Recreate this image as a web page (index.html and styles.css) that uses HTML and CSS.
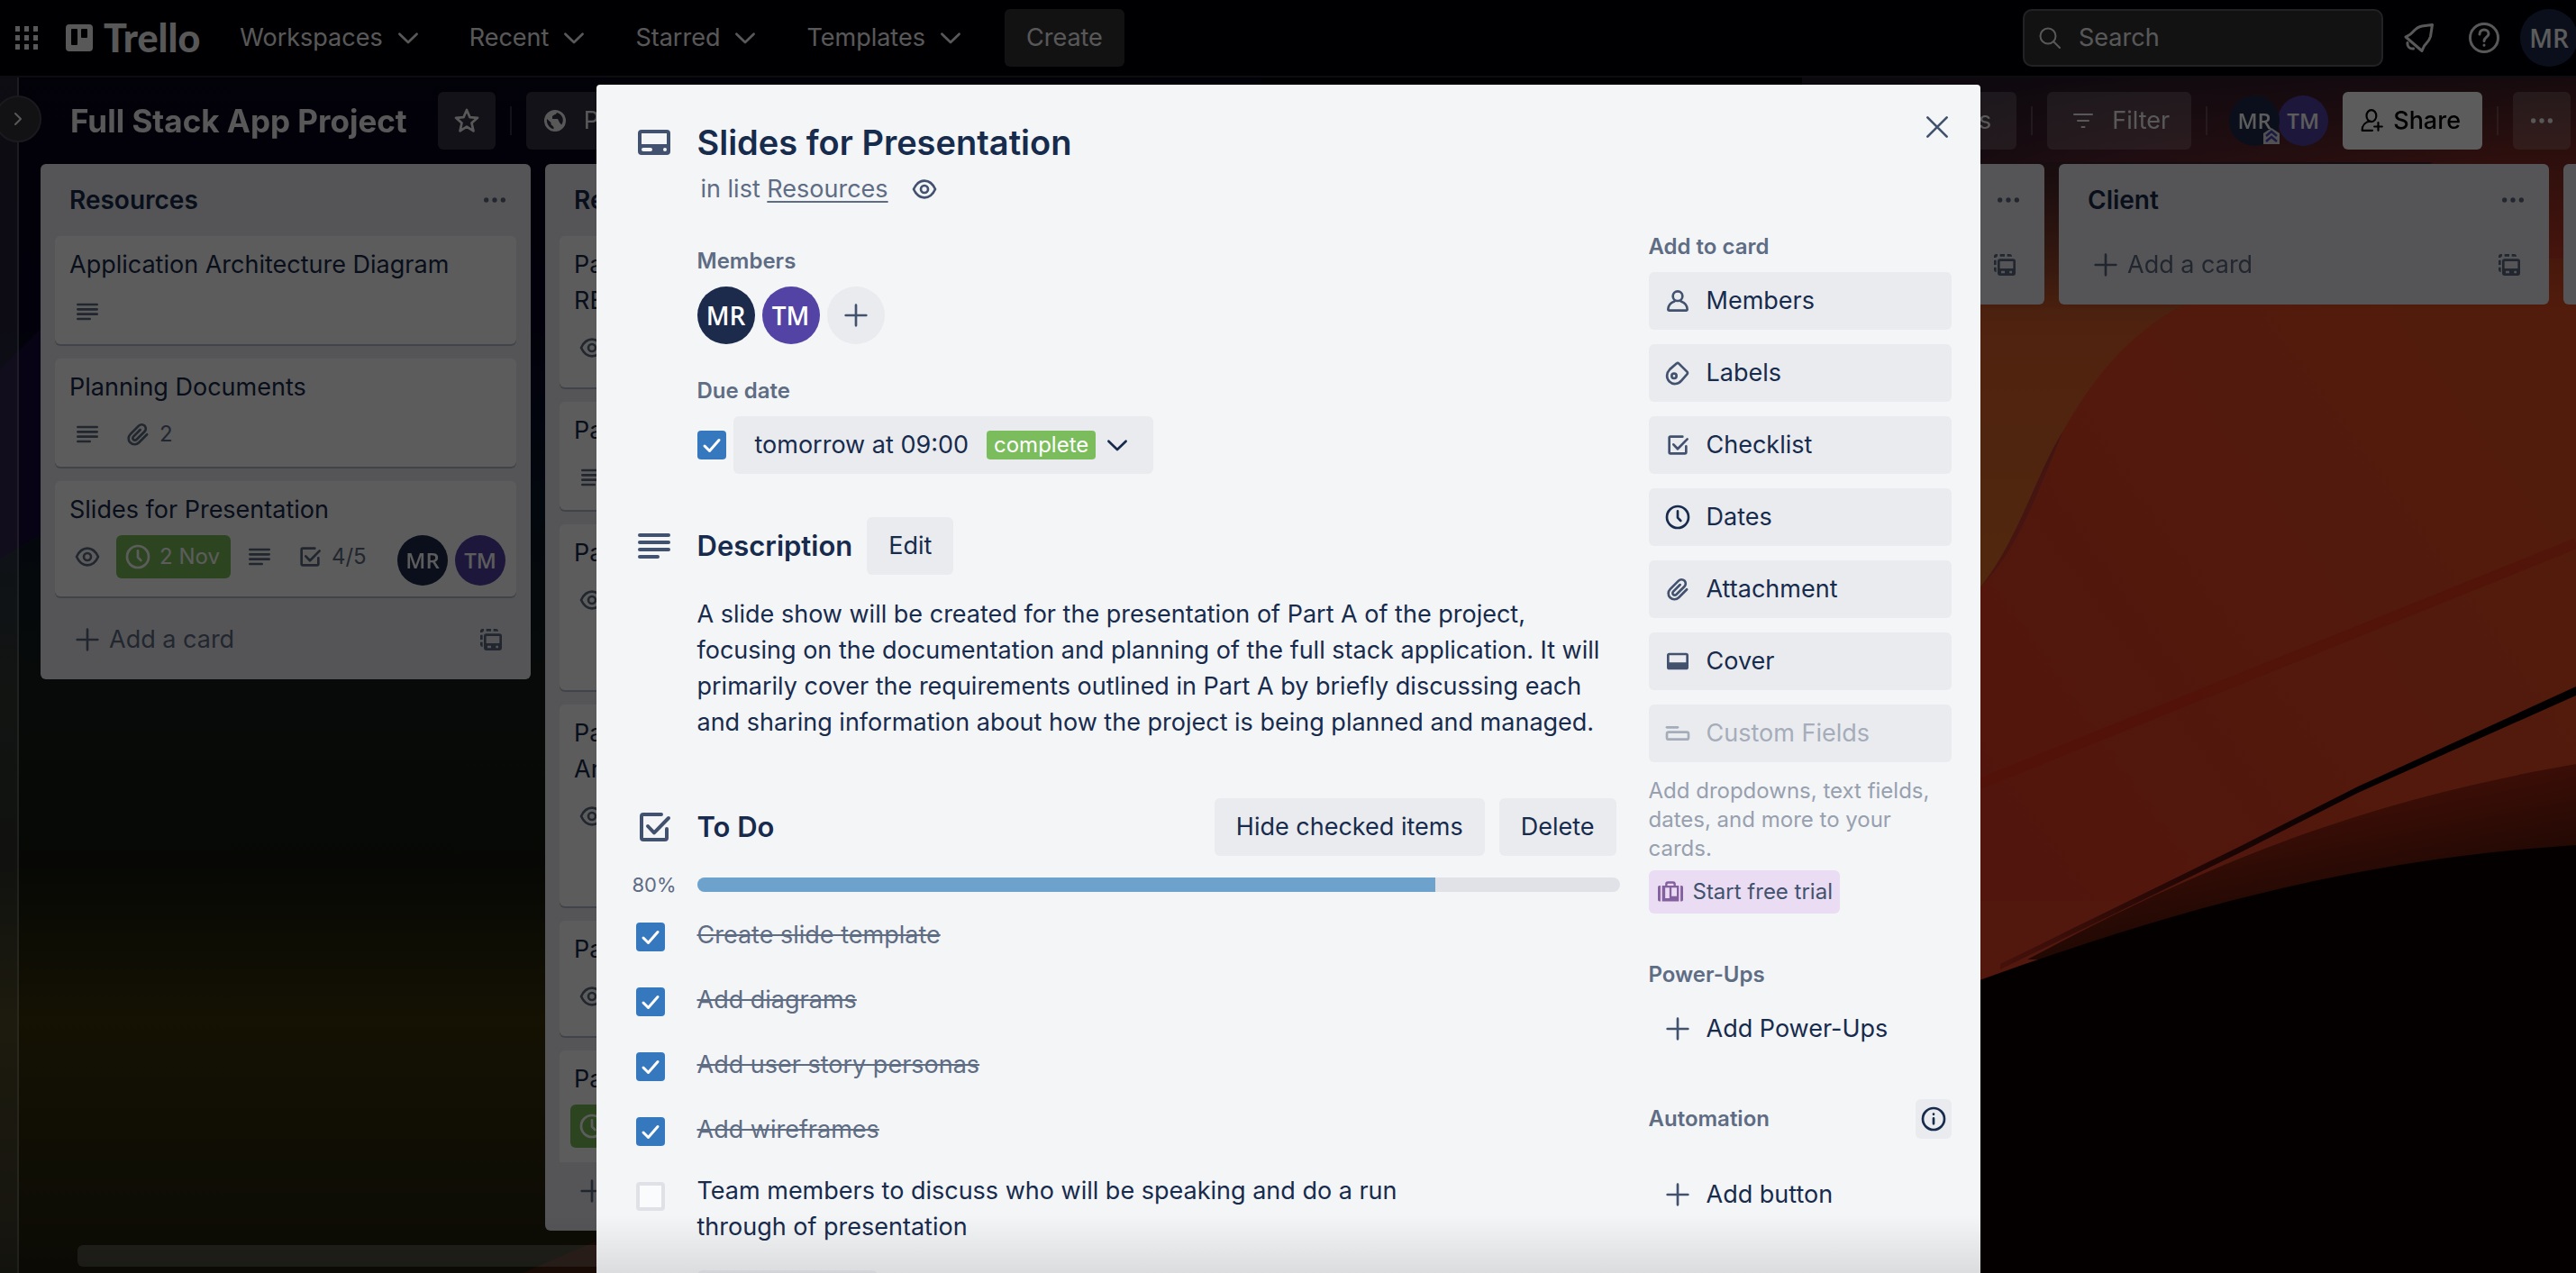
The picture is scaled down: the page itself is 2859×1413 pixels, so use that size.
FILE: index.html
```html
<!DOCTYPE html>
<html lang="en">
<head>
<meta charset="utf-8">
<title>Full Stack App Project | Trello</title>
<meta name="viewport" content="width=device-width, initial-scale=1">
<link rel="stylesheet" href="styles.css">
</head>
<body>
<svg class="sprite" aria-hidden="true">
  <defs>
    <symbol id="i-chevron" viewBox="0 0 24 24"><path class="s" d="M4.8 8.8l7.2 7 7.2-7"/></symbol>
    <symbol id="i-lines" viewBox="0 0 24 24"><path class="s" d="M4 6h16M4 10h16M4 14h16M4 18h10"/></symbol>
    <symbol id="i-eye" viewBox="0 0 24 24"><path class="s" d="M3 12c2-4.400 5.200-7 9-7s7 2.600 9 7c-2 4.400-5.200 7-9 7s-7-2.600-9-7z"/><circle class="s" cx="12" cy="12" r="3"/></symbol>
    <symbol id="i-clip" viewBox="0 0 24 24"><path class="s" d="M19.600 12.200l-6.700 6.700c-2 2-5.200 2-7.200.100s-1.900-5.100.100-7.100l6.900-6.900c1.400-1.400 3.500-1.400 4.900-.100s1.300 3.500 0 4.800l-6.800 6.800c-.700.700-1.800.700-2.500 0s-.700-1.800 0-2.500l5.700-5.700"/></symbol>
    <symbol id="i-clock" viewBox="0 0 24 24"><circle class="s" cx="12" cy="12" r="9"/><path class="s" d="M12 7v5.500l2.500 2.500"/></symbol>
    <symbol id="i-check" viewBox="0 0 24 24"><path class="s" d="M16 5H6a1 1 0 0 0-1 1v12a1 1 0 0 0 1 1h12a1 1 0 0 0 1-1v-5M8.500 11.500l3.500 3.700L20 7"/></symbol>
    <symbol id="i-plus" viewBox="0 0 24 24"><path class="s" d="M12 3.500v17M3.500 12h17"/></symbol>
    <symbol id="i-dots" viewBox="0 0 24 24"><circle class="f" cx="5" cy="12" r="2"/><circle class="f" cx="12" cy="12" r="2"/><circle class="f" cx="19" cy="12" r="2"/></symbol>
    <symbol id="i-template" viewBox="0 0 24 24"><path class="f" fill-rule="evenodd" d="M8 7h11a2 2 0 0 1 2 2v10a2 2 0 0 1-2 2H8a2 2 0 0 1-2-2V9a2 2 0 0 1 2-2zm0 2v6h11V9zm1 8v2h3v-2zm7 0v2h2v-2z"/><path class="f" d="M3 5a2 2 0 0 1 2-2h1v2H5v1H3zM8 3h4v2H8zM14 3h2a2 2 0 0 1 2 2h-4zM3 8h2v4H3zM3 14h2v4a2 2 0 0 1-2-2z"/></symbol>
    <symbol id="i-card" viewBox="0 0 24 24"><path class="f" fill-rule="evenodd" d="M5 5h14a2 2 0 0 1 2 2v10a2 2 0 0 1-2 2H5a2 2 0 0 1-2-2V7a2 2 0 0 1 2-2zm0 2v6h14V7zm1 8a1 1 0 0 0 0 2h4a1 1 0 0 0 0-2zm12 0a1 1 0 1 0 0 2 1 1 0 0 0 0-2z"/></symbol>
    <symbol id="i-cover" viewBox="0 0 24 24"><path class="f" fill-rule="evenodd" d="M5 5h14a2 2 0 0 1 2 2v10a2 2 0 0 1-2 2H5a2 2 0 0 1-2-2V7a2 2 0 0 1 2-2zm0 2v6h14V7z"/></symbol>
    <symbol id="i-member" viewBox="0 0 24 24"><circle class="s" cx="12" cy="8" r="4"/><path class="s" d="M9.300 12.300C6 13.500 4 16 4 19.200c0 .500.300.800.800.800h14.400c.500 0 .800-.300.800-.800 0-3.200-2-5.700-5.300-6.900"/></symbol>
    <symbol id="i-label" viewBox="0 0 24 24"><path class="s" d="M11 4.200c.600-.600 1.400-.600 2 0l6.800 6.800c.600.600.600 1.400 0 2l-4.600 5.300c-3 3.500-7.300 3.500-10.100.800s-2.700-7 .400-10.200z"/><circle class="s" cx="9" cy="14.500" r="2"/></symbol>
    <symbol id="i-fields" viewBox="0 0 24 24"><path class="s" d="M3 7h9"/><rect class="s" x="3" y="11" width="18" height="6" rx="1.500"/></symbol>
    <symbol id="i-case" viewBox="0 0 24 24"><path class="f" fill-rule="evenodd" d="M2.500 6v15h-1A1.500 1.500 0 0 1 0 19.500v-12A1.500 1.500 0 0 1 1.500 6zM7 6V4.500A2.500 2.500 0 0 1 9.500 2h5A2.500 2.500 0 0 1 17 4.500V6h3v15H4V6zm2-1v1h6V5a1 1 0 0 0-1-1h-4a1 1 0 0 0-1 1zM7 8v10h4V8zm6 0v8h5V8zM21.500 6h1A1.500 1.500 0 0 1 24 7.500v12a1.500 1.500 0 0 1-1.500 1.500h-1z"/></symbol>
    <symbol id="i-close" viewBox="0 0 24 24"><path class="s" d="M4 4l16 16M20 4L4 20"/></symbol>
    <symbol id="i-info" viewBox="0 0 24 24"><circle class="s" cx="12" cy="12" r="9"/><path class="s" d="M12 11.500V16M12 8v.100"/></symbol>
    <symbol id="i-star" viewBox="0 0 24 24"><path class="s" d="M12 3l2.600 6.100 6.400.500-4.900 4.300 1.500 6.600L12 17l-5.600 3.500 1.500-6.600L3 9.600l6.400-.500z"/></symbol>
    <symbol id="i-globe" viewBox="0 0 24 24"><path class="f" fill-rule="evenodd" d="M12 0a12 12 0 1 1 0 24 12 12 0 0 1 0-24zM3 10c-.800 5 2.500 10 7.500 11.300V19l-3-3v-2zM14 3c-.500 1-1 2-2.500 2.200L9 7v3h6l2 4 2.200 2.500c3-4.500 2.200-11-5.200-13.500z"/></symbol>
    <symbol id="i-filter" viewBox="0 0 24 24"><path class="s" d="M2 5h20M6 12h12M10.500 19h3"/></symbol>
    <symbol id="i-share" viewBox="0 0 24 24"><path class="s" d="M10 12.500C5 13 1.500 16.500 1.500 22H12"/><ellipse class="s" cx="11" cy="7" rx="5" ry="6"/><path class="s" d="M18 14v8M14 18h8"/></symbol>
    <symbol id="i-search" viewBox="0 0 24 24"><circle class="s" cx="10" cy="10" r="8.500"/><path class="s" d="M16.500 16.500L23 23"/></symbol>
    <symbol id="i-bell" viewBox="0 0 34 34"><path class="s" d="M31.500 2.500L20 4C12 5.500 11 11 6.500 13.500L2 16l18 15.500 2-4.500c1-3 6-5.500 7.500-11.500zM4 22.500c-.500 4 2.500 7 6.500 6.500"/></symbol>
    <symbol id="i-help" viewBox="0 0 34 34"><circle class="s" cx="17" cy="17" r="15.500"/><path class="s" d="M12 13c0-3 2-5 5-5s5 2 5 4.700c0 3.300-5 3.800-5 7.800M17 25v.200"/></symbol>
  </defs>
</svg>

<svg class="wallpaper" viewBox="0 0 2859 1413" preserveAspectRatio="xMidYMid slice" aria-hidden="true">
  <defs>
    <linearGradient id="w-left" x1="0" y1="0" x2="0" y2="1">
      <stop offset="0" stop-color="#060618"/><stop offset=".25" stop-color="#060420"/><stop offset=".4" stop-color="#0a1628"/>
      <stop offset=".54" stop-color="#161e19"/><stop offset=".68" stop-color="#14180f"/><stop offset=".8" stop-color="#3a320b"/><stop offset="1" stop-color="#22200f"/>
    </linearGradient>
    <linearGradient id="w-red" gradientUnits="userSpaceOnUse" x1="2080" y1="100" x2="2500" y2="480">
      <stop offset="0" stop-color="#241d2c"/><stop offset=".45" stop-color="#8c3440"/><stop offset="1" stop-color="#e44024"/>
    </linearGradient>
    <linearGradient id="w-glow" gradientUnits="userSpaceOnUse" x1="2300" y1="1000" x2="2859" y2="600">
      <stop offset="0" stop-color="#e43c24"/><stop offset="1" stop-color="#e44e22"/>
    </linearGradient>
    <linearGradient id="w-orange" gradientUnits="userSpaceOnUse" x1="2230" y1="180" x2="2230" y2="640">
      <stop offset="0" stop-color="#5a2c2c"/><stop offset=".4" stop-color="#dc602c"/><stop offset="1" stop-color="#e06e28"/>
    </linearGradient>
    <linearGradient id="w-band" gradientUnits="userSpaceOnUse" x1="2780" y1="860" x2="2800" y2="960">
      <stop offset="0" stop-color="#a42814"/><stop offset="1" stop-color="#5c180a"/>
    </linearGradient>
    <linearGradient id="w-line" gradientUnits="userSpaceOnUse" x1="2220" y1="1080" x2="2640" y2="870">
      <stop offset="0" stop-color="#c03020"/><stop offset=".5" stop-color="#60140e"/><stop offset="1" stop-color="#0a0208"/>
    </linearGradient>
    <linearGradient id="w-fade" x1="0" y1="0" x2="0" y2="1">
      <stop offset="0" stop-color="#201828" stop-opacity=".85"/><stop offset="1" stop-color="#402028" stop-opacity="0"/>
    </linearGradient>
  </defs>
  <rect width="2859" height="1413" fill="#04040c"/>
  <rect width="1400" height="1413" fill="url(#w-left)"/>
  <path d="M0 410L50 360V590L0 620z" fill="#140838"/>
  <path d="M580 1413L680 1370V1413z" fill="#4a2010"/>
  <path d="M2000 86H2859V1100H2000z" fill="url(#w-red)"/>
  <path d="M2197 653C2240 610 2260 550 2290 478C2320 410 2380 360 2425 338C2500 300 2700 290 2859 286V1000H2197z" fill="url(#w-glow)"/>
  <path d="M2100 180H2700C2600 270 2480 305 2425 338C2360 370 2320 425 2290 478C2260 525 2240 600 2197 653H2100z" fill="url(#w-orange)"/>
  <rect x="2000" y="86" width="859" height="260" fill="url(#w-fade)"/>
  <path d="M2197 870L2859 603" stroke="#e42814" stroke-width="12" opacity=".5"/>
  <path d="M2859 848C2617 890 2446 960 2250 1065L2859 1065z" fill="url(#w-band)"/>
  <path d="M2859 762L2617 873L2489 938L2220 1070V1076L2489 945L2617 880L2859 772z" fill="url(#w-line)"/>
  <path d="M2859 938C2600 955 2400 1015 2197 1088H2100V1413H2859z" fill="#100202"/>
</svg>

<header class="topbar">
  <button class="icon-btn apps" aria-label="Switch apps">
    <svg viewBox="0 0 27 27"><path class="f" d="M1 0h5v6H1zM11 0h5v6h-5zM21 0h5v6h-5zM1 10h5v6H1zM11 10h5v6h-5zM21 10h5v6h-5zM1 20h5v6H1zM11 20h5v6h-5zM21 20h5v6h-5z"/></svg>
  </button>
  <a class="logo" href="#">
    <svg viewBox="0 0 30 30" aria-hidden="true"><path class="f" fill-rule="evenodd" d="M4 0h22a4 4 0 0 1 4 4v22a4 4 0 0 1-4 4H4a4 4 0 0 1-4-4V4a4 4 0 0 1 4-4zm3 5a1 1 0 0 0-1 1v16a1 1 0 0 0 1 1h5a1 1 0 0 0 1-1V6a1 1 0 0 0-1-1zm11 0a1 1 0 0 0-1 1v8a1 1 0 0 0 1 1h5a1 1 0 0 0 1-1V6a1 1 0 0 0-1-1z"/></svg>
    <span>Trello</span>
  </a>
  <nav class="menu">
    <button>Workspaces<svg class="ic"><use href="#i-chevron"/></svg></button>
    <button>Recent<svg class="ic"><use href="#i-chevron"/></svg></button>
    <button>Starred<svg class="ic"><use href="#i-chevron"/></svg></button>
    <button>Templates<svg class="ic"><use href="#i-chevron"/></svg></button>
  </nav>
  <button class="create">Create</button>
  <label class="search"><svg aria-hidden="true"><use href="#i-search"/></svg><input type="search" placeholder="Search" aria-label="Search"></label>
  <button class="icon-btn tool" aria-label="Notifications"><svg><use href="#i-bell"/></svg></button>
  <button class="icon-btn tool" aria-label="Help"><svg><use href="#i-help"/></svg></button>
  <span class="avatar lg navy">MR</span>
</header>

<div class="workspace">
  <aside class="rail"><button class="toggle" aria-label="Open sidebar"><svg viewBox="0 0 12 16"><path class="s" d="M3 2l6 6-6 6"/></svg></button></aside>
  <main class="board">
    <div class="boardbar">
      <h1>Full Stack App Project</h1>
      <button class="bar-btn square" aria-label="Star board"><svg class="ic"><use href="#i-star"/></svg></button>
      <i class="rule"></i>
      <button class="bar-btn public"><svg><use href="#i-globe"/></svg>Public</button>
      <span class="grow"></span>
      <button class="bar-btn power">Power-Ups</button>
      <i class="rule"></i>
      <button class="bar-btn filter"><svg><use href="#i-filter"/></svg>Filter</button>
      <i class="rule"></i>
      <div class="people">
        <span class="avatar md navy">MR<svg class="admin" viewBox="0 0 18 18"><path d="M0 6L9 0l9 6v12H0z" fill="#dfe1e6"/><path d="M3 9l6-5 6 5M3 15l6-5 6 5" fill="none" stroke="#4c46b8" stroke-width="2.500"/></svg></span>
        <span class="avatar md violet">TM</span>
      </div>
      <button class="share"><svg><use href="#i-share"/></svg>Share</button>
      <i class="rule"></i>
      <button class="bar-btn more" aria-label="Show menu"><svg class="ic"><use href="#i-dots"/></svg></button>
    </div>

    <div class="lists">
      <section class="list">
        <header><h2>Resources</h2><button aria-label="List actions"><svg class="ic"><use href="#i-dots"/></svg></button></header>
        <article class="card"><p>Application Architecture Diagram</p>
          <div class="badges"><span class="badge"><svg class="ic"><use href="#i-lines"/></svg></span></div></article>
        <article class="card"><p>Planning Documents</p>
          <div class="badges"><span class="badge"><svg class="ic"><use href="#i-lines"/></svg></span><span class="badge"><svg class="ic"><use href="#i-clip"/></svg>2</span></div></article>
        <article class="card"><p>Slides for Presentation</p>
          <div class="badges"><span class="badge"><svg class="ic"><use href="#i-eye"/></svg></span><span class="badge done"><svg class="ic"><use href="#i-clock"/></svg>2 Nov</span><span class="badge"><svg class="ic"><use href="#i-lines"/></svg></span><span class="badge"><svg class="ic"><use href="#i-check"/></svg>4/5</span>
            <span class="faces"><span class="avatar md navy">MR</span><span class="avatar md violet">TM</span></span></div></article>
        <footer><button class="add"><svg class="ic"><use href="#i-plus"/></svg>Add a card</button><button aria-label="Create from template"><svg class="ic"><use href="#i-template"/></svg></button></footer>
      </section>

      <section class="list">
        <header><h2>Requirements</h2><button aria-label="List actions"><svg class="ic"><use href="#i-dots"/></svg></button></header>
        <article class="card"><p>Part A<br>README</p>
          <div class="badges"><span class="badge"><svg class="ic"><use href="#i-eye"/></svg></span><span class="faces"><span class="avatar md navy"></span></span></div></article>
        <article class="card"><p>Part A</p>
          <div class="badges"><span class="badge"><svg class="ic"><use href="#i-lines"/></svg></span></div></article>
        <article class="card"><p>Part A</p>
          <div class="badges"><span class="badge"><svg class="ic"><use href="#i-eye"/></svg></span></div>
          <div class="badges"><span class="faces"><span class="avatar md navy"></span></span></div></article>
        <article class="card"><p>Part A<br>Architecture</p>
          <div class="badges"><span class="badge"><svg class="ic"><use href="#i-eye"/></svg></span></div>
          <div class="badges"><span class="faces"><span class="avatar md navy"></span></span></div></article>
        <article class="card"><p>Part A</p>
          <div class="badges"><span class="badge"><svg class="ic"><use href="#i-eye"/></svg></span><span class="faces"><span class="avatar md navy"></span></span></div></article>
        <article class="card cut"><p>Part A</p>
          <div class="badges"><span class="badge done"><svg class="ic"><use href="#i-clock"/></svg>2 Nov</span></div></article>
        <footer><button class="add"><svg class="ic"><use href="#i-plus"/></svg>Add a card</button></footer>
      </section>

      <section class="list">
        <header></header>
        <footer></footer>
      </section>
      <section class="list">
        <header><h2></h2><button aria-label="List actions"><svg class="ic"><use href="#i-dots"/></svg></button></header>
        <footer><span></span><button aria-label="Create from template"><svg class="ic"><use href="#i-template"/></svg></button></footer>
      </section>
      <section class="list">
        <header><h2>Client</h2><button aria-label="List actions"><svg class="ic"><use href="#i-dots"/></svg></button></header>
        <footer><button class="add"><svg class="ic"><use href="#i-plus"/></svg>Add a card</button><button aria-label="Create from template"><svg class="ic"><use href="#i-template"/></svg></button></footer>
      </section>
      <section class="list">
        <header></header>
        <footer></footer>
      </section>
    </div>
    <div class="scroller"><div class="thumb"></div></div>
  </main>
</div>

<div class="overlay">
  <section class="modal" role="dialog" aria-modal="true" aria-labelledby="card-title">
    <button class="close" aria-label="Close"><svg class="ic"><use href="#i-close"/></svg></button>
    <header class="modal-head">
      <svg class="big"><use href="#i-card"/></svg>
      <div>
        <h2 id="card-title">Slides for Presentation</h2>
        <p class="where">in list <a href="#">Resources</a><svg class="ic"><use href="#i-eye"/></svg></p>
      </div>
    </header>
    <div class="columns">
      <div class="content">
        <div class="details">
          <h3>Members</h3>
          <div class="members"><span class="avatar lg navy">MR</span><span class="avatar lg violet">TM</span><button class="avatar lg plus" aria-label="Add member"><svg class="ic"><use href="#i-plus"/></svg></button></div>
          <h3 class="due-label">Due date</h3>
          <div class="due"><input type="checkbox" checked aria-label="Mark due date complete"><button class="soft">tomorrow at 09:00<span class="complete">complete</span><svg class="ic"><use href="#i-chevron"/></svg></button></div>
        </div>

        <div class="row description-head"><svg class="big"><use href="#i-lines"/></svg><h4>Description</h4><button class="soft">Edit</button></div>
        <p class="description">A slide show will be created for the presentation of Part A of the project, focusing on the documentation and planning of the full stack application. It will primarily cover the requirements outlined in Part A by briefly discussing each and sharing information about how the project is being planned and managed.</p>

        <div class="row todo-head"><svg class="big"><use href="#i-check"/></svg><h4>To Do</h4><span class="grow"></span><button class="soft">Hide checked items</button><button class="soft">Delete</button></div>
        <div class="progress"><span>80%</span><div class="track"><div class="fill" style="width:80%"></div></div></div>
        <ul class="items">
          <li><input type="checkbox" id="t1" checked><label for="t1">Create slide template</label></li>
          <li><input type="checkbox" id="t2" checked><label for="t2">Add diagrams</label></li>
          <li><input type="checkbox" id="t3" checked><label for="t3">Add user story personas</label></li>
          <li><input type="checkbox" id="t4" checked><label for="t4">Add wireframes</label></li>
          <li><input type="checkbox" id="t5"><label for="t5">Team members to discuss who will be speaking and do a run through of presentation</label></li>
        </ul>
        <button class="soft add-item" aria-label="Add an item"></button>
      </div>

      <aside class="side">
        <h3>Add to card</h3>
        <div class="actions">
          <button><svg class="ic"><use href="#i-member"/></svg>Members</button>
          <button><svg class="ic"><use href="#i-label"/></svg>Labels</button>
          <button><svg class="ic"><use href="#i-check"/></svg>Checklist</button>
          <button><svg class="ic dark"><use href="#i-clock"/></svg>Dates</button>
          <button><svg class="ic"><use href="#i-clip"/></svg>Attachment</button>
          <button><svg class="ic"><use href="#i-cover"/></svg>Cover</button>
          <button disabled><svg class="ic"><use href="#i-fields"/></svg>Custom Fields</button>
        </div>
        <p class="hint">Add dropdowns, text fields, dates, and more to your cards.</p>
        <button class="trial"><svg><use href="#i-case"/></svg>Start free trial</button>
        <h3 class="power-label">Power-Ups</h3>
        <div class="actions plain"><button><svg class="ic"><use href="#i-plus"/></svg>Add Power-Ups</button></div>
        <div class="auto"><h3>Automation</h3><button aria-label="About automation"><svg class="ic"><use href="#i-info"/></svg></button></div>
        <div class="actions plain last"><button><svg class="ic"><use href="#i-plus"/></svg>Add button</button></div>
      </aside>
    </div>
  </section>
</div>
</body>
</html>
```
FILE: styles.css
```css
:root {
  --navy: #172b4d;
  --subtle: #5e6c84;
  --icon: #42526e;
  --soft: #eaebef;
  --text: 27px;
  --small: 24px;
}

* { box-sizing: border-box; }

body {
  margin: 0;
  height: 100vh;
  overflow: hidden;
  display: flex;
  flex-direction: column;
  font: 400 var(--text)/40px Inter, "Liberation Sans", sans-serif;
  color: var(--navy);
  background: #04040c;
}

h1, h2, h3, h4, p, ul { margin: 0; padding: 0; }
button { font: inherit; color: inherit; border: 0; padding: 0; background: none; cursor: pointer; }
svg { display: block; flex: none; }

.sprite { position: absolute; width: 0; height: 0; }
.s { fill: none; stroke: currentColor; stroke-width: 2; stroke-linecap: round; stroke-linejoin: round; }
.f { fill: currentColor; }
.ic { width: 32px; height: 32px; }
.big { width: 48px; height: 48px; color: var(--icon); }
.grow { flex: 1; }

.wallpaper { position: fixed; inset: 0; width: 100%; height: 100%; }

.avatar {
  position: relative;
  display: flex;
  align-items: center;
  justify-content: center;
  flex: none;
  border-radius: 50%;
  color: #fff;
  font-family: "Open Sans", sans-serif;
  font-weight: 600;
}
.avatar.lg { width: 64px; height: 64px; font-size: 28px; }
.avatar.md { width: 56px; height: 56px; font-size: 24px; }
.navy { background: #1c2b4b; }
.violet { background: #5243a5; }

/* Top bar */
.topbar {
  position: relative;
  display: flex;
  align-items: center;
  flex: none;
  height: 86px;
  padding-left: 16px;
  border-bottom: 2px solid #26262e;
  background: #000008;
  color: #f4f4f4;
}
.icon-btn { flex: none; }
.apps svg { width: 27px; height: 27px; }
.logo { display: flex; align-items: center; gap: 12px; margin-left: 30px; color: #f4f4f4; text-decoration: none; }
.logo svg { width: 30px; height: 30px; }
.logo span { font: 900 43px/40px Lato, sans-serif; }
.menu { display: flex; gap: 4px; margin-left: 20px; }
.menu button { display: flex; align-items: center; gap: 12px; height: 64px; padding: 0 24px; }
.create { height: 64px; margin: 0 auto 0 20px; padding: 0 24px; border-radius: 6px; background: #323235; }
.search { display: flex; align-items: center; gap: 20px; width: 400px; height: 64px; padding: 0 16px; border: 2px solid #606066; border-radius: 10px; background: #343436; }
.search svg { width: 24px; height: 24px; }
.search input { flex: 1; min-width: 0; padding: 0; border: 0; outline: 0; background: none; color: #f4f4f4; font: inherit; }
.search input::placeholder { color: #f4f4f4; opacity: 1; }
.tool svg { width: 34px; height: 34px; }
.tool { margin-left: 23px; }
.tool + .tool { margin-left: 38px; }
.tool .s { stroke-width: 3; }
#i-bell .s, #i-help .s { stroke-width: 3; }
.topbar > .avatar { margin: 0 -2px 0 23px; }

/* Board */
.workspace { position: relative; display: flex; flex: 1; min-height: 0; }
.rail { flex: none; width: 21px; border-right: 2px solid rgba(255, 255, 255, .2); background: rgba(255, 255, 255, .12); }
.toggle {
  position: absolute;
  z-index: 1;
  left: -6px;
  top: 20px;
  width: 52px;
  height: 52px;
  display: flex;
  align-items: center;
  justify-content: center;
  border: 2px solid #4a4a55;
  border-radius: 50%;
  background: #323238;
  color: #f4f4f4;
}
.toggle svg { width: 12px; height: 16px; }
.board { display: flex; flex-direction: column; flex: 1; min-width: 0; overflow: hidden; }
.boardbar { display: flex; align-items: center; flex: none; height: 96px; padding: 0 6px 0 57px; color: #f4f4f4; }
.boardbar h1 { margin-right: 34px; font-size: 35px; font-weight: 700; white-space: nowrap; }
.bar-btn { display: flex; align-items: center; height: 64px; border-radius: 6px; background: rgba(255, 255, 255, .18); }
.bar-btn.square, .bar-btn.more { width: 64px; justify-content: center; }
.rule { flex: none; width: 2px; height: 32px; margin: 0 16px; background: rgba(255, 255, 255, .18); }
.public { gap: 20px; padding: 0 20px; }
.public svg, .filter svg { width: 24px; height: 24px; }
.power { padding: 0 28px; }
.filter { gap: 20px; padding: 0 24px 0 28px; }
.people { display: flex; margin: 0 16px 0 8px; }
.people .avatar + .avatar { margin-left: -2px; }
.people .navy { z-index: 1; }
.admin { position: absolute; right: 0; bottom: 2px; width: 18px; height: 18px; }
.share { display: flex; align-items: center; gap: 10px; height: 64px; padding: 0 24px 0 20px; border-radius: 6px; background: #fff; color: #000; font-weight: 500; }
.share svg { width: 26px; height: 26px; }

.lists { display: flex; align-items: flex-start; gap: 16px; padding-left: 24px; }
.list { flex: none; width: 544px; padding: 0 16px 12px; border-radius: 6px; background: #ebecf0; color: var(--navy); }
.list header, .list footer { display: flex; align-items: center; justify-content: space-between; color: var(--subtle); }
.list header { height: 80px; padding: 0 8px 0 16px; }
.list footer { height: 64px; padding: 0 12px 0 20px; }
.list h2 { color: var(--navy); font-size: 28px; font-weight: 600; }
.add { display: flex; align-items: center; gap: 8px; }
.card { margin-bottom: 16px; padding: 12px; border-radius: 6px; background: #fff; box-shadow: 0 2px 0 rgba(9, 30, 66, .25); }
.card p { padding: 0 4px; white-space: nowrap; }
.badges { display: flex; align-items: flex-start; gap: 8px; margin-top: 8px; color: var(--subtle); }
.badge { display: flex; align-items: center; gap: 8px; height: 48px; padding: 0 8px; border-radius: 6px; font-size: var(--small); }
.badge.done { padding-right: 12px; background: #7bc05a; color: #fff; }
.faces { display: flex; gap: 8px; margin-left: auto; }
.card.cut { margin-bottom: 0; padding-bottom: 16px; border-radius: 6px 6px 0 0; box-shadow: none; }
.scroller { margin: auto 24px 7px 65px; }
.thumb { width: 72%; height: 24px; border-radius: 6px; background: rgba(255, 255, 255, .24); }

/* Card dialog */
.overlay {
  position: fixed;
  z-index: 10;
  inset: 0;
  display: flex;
  align-items: flex-start;
  justify-content: center;
  padding-top: 94px;
  overflow: hidden;
  background: rgba(0, 0, 0, .64);
}
.overlay::after {
  content: "";
  position: absolute;
  inset: auto 0 0;
  height: 64px;
  background: linear-gradient(transparent, rgba(0, 0, 0, .1));
  pointer-events: none;
}
.modal {
  position: relative;
  width: 1536px;
  max-width: 100%;
  padding: 32px 32px 64px 40px;
  border-radius: 4px;
  background: #f4f5f7;
}
.close { position: absolute; top: 31px; right: 32px; color: var(--icon); }
.modal-head { display: flex; gap: 24px; }
.modal-head .big { margin-top: 8px; }
.modal-head h2 { font-size: 38px; line-height: 64px; font-weight: 600; }
.where { display: flex; align-items: center; padding-left: 4px; color: var(--subtle); white-space: pre; }
.where a { color: inherit; text-underline-offset: 4px; }
.where .ic { margin-left: 24px; color: var(--icon); }
.columns { display: grid; grid-template-columns: 1fr 336px; gap: 32px; }
h3 { font-size: var(--small); line-height: 40px; font-weight: 600; color: var(--subtle); }
h4 { font-size: 31px; font-weight: 600; }
.details { padding: 40px 0 0 72px; }
.members { display: flex; gap: 8px; margin-top: 8px; }
.plus { background: var(--soft); color: var(--icon); }
.due-label { margin-top: 32px; }
.due { display: flex; align-items: center; gap: 8px; margin-top: 8px; }
.soft { display: flex; align-items: center; height: 64px; padding: 0 24px; border-radius: 6px; background: var(--soft); }
.complete { margin: 0 8px 0 20px; padding: 0 8px; border-radius: 4px; background: #7bbd5c; color: #fff; font-size: var(--small); line-height: 32px; }

input[type="checkbox"] {
  appearance: none;
  flex: none;
  width: 32px;
  height: 32px;
  margin: 0;
  border: 4px solid #dfe1e6;
  border-radius: 4px;
  background: #fafbfc;
}
input[type="checkbox"]:checked {
  border: 0;
  background: #3578bd url("data:image/svg+xml,%3Csvg xmlns='http://www.w3.org/2000/svg' viewBox='0 0 32 32'%3E%3Cpath d='M8 17l5.500 5.500L24 10.500' fill='none' stroke='%23fff' stroke-width='3' stroke-linecap='round' stroke-linejoin='round'/%3E%3C/svg%3E");
}

.row { display: flex; align-items: center; height: 64px; }
.row h4 { margin-left: 24px; }
.row .soft { margin-left: 16px; }
.description-head { margin-top: 48px; }
.description { padding: 24px 0 0 72px; }
.todo-head { margin-top: 64px; padding-right: 4px; }
.progress { display: flex; align-items: center; gap: 24px; height: 40px; margin-top: 12px; }
.progress span { width: 48px; font-size: 22px; color: var(--subtle); }
.track { flex: 1; height: 16px; border-radius: 8px; background: #e0e2e8; overflow: hidden; }
.fill { height: 100%; background: #6ca2cb; }
.items { list-style: none; }
.items li { display: flex; align-items: flex-start; gap: 36px; min-height: 72px; padding: 12px 180px 12px 4px; }
.items input { margin-top: 10px; }
.items input:checked + label { line-height: 48px; color: var(--subtle); text-decoration: line-through; }
.add-item { width: 200px; margin: 16px 0 0 72px; }

.side { padding-top: 24px; }
.actions { display: grid; gap: 16px; margin-top: 8px; }
.actions button { display: flex; align-items: center; gap: 16px; height: 64px; padding: 0 16px; border-radius: 6px; background: var(--soft); }
.actions .ic { color: var(--icon); }
.actions .dark { color: var(--navy); }
.actions button:disabled, .actions button:disabled .ic { color: #a5adba; }
.actions.plain button { background: none; }
.hint { margin-top: 16px; font-size: var(--small); line-height: 32px; color: #97a0af; }
.trial { display: flex; align-items: center; gap: 11px; height: 48px; margin-top: 8px; padding: 0 8px 0 10px; border-radius: 6px; background: #eadcf3; color: #42526e; font-size: var(--small); }
.trial svg { width: 28px; height: 28px; color: #85609e; }
.power-label { margin-top: 48px; }
.auto { display: flex; align-items: center; justify-content: space-between; height: 48px; margin-top: 44px; }
.auto button { display: flex; align-items: center; justify-content: center; width: 40px; height: 44px; border-radius: 6px; background: var(--soft); }
.last { margin-top: 28px; }
```
